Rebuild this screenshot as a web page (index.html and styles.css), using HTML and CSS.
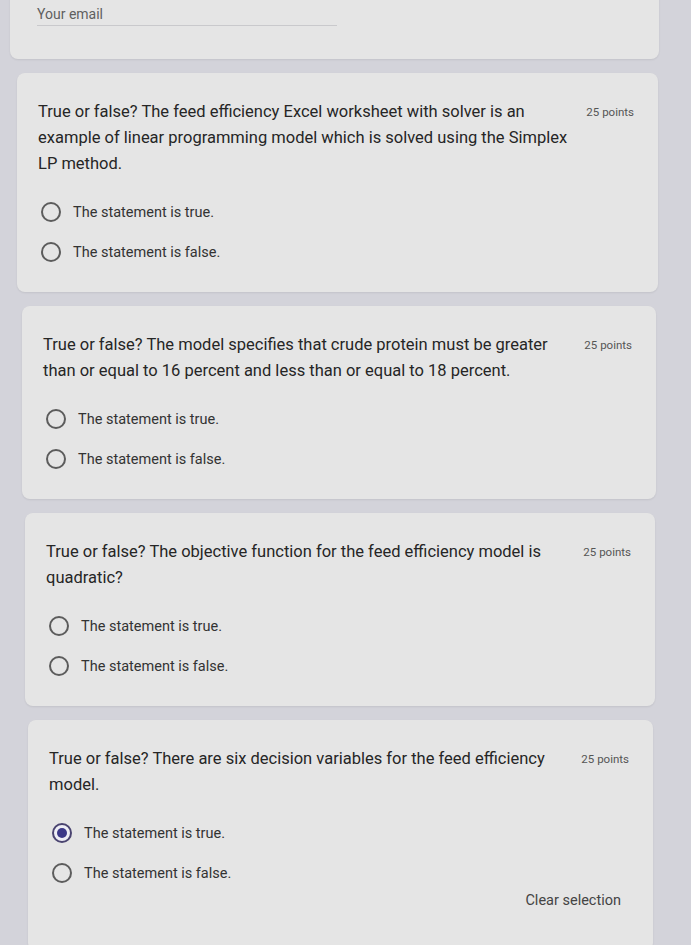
FILE: index.html
```html
<!DOCTYPE html>
<html lang="en">
<head>
    <meta charset="UTF-8">
    <meta name="viewport" content="width=device-width, initial-scale=1.0">
    <title>Feed Efficiency Quiz</title>
    <link rel="stylesheet" href="styles.css">
</head>
<body>
    <div class="form">
        <div class="card email-card">
            <div class="email-field">Your email</div>
        </div>

        <div class="card">
            <div class="question-head">
                <div class="question">True or false? The feed efficiency Excel worksheet with solver is an example of linear programming model which is solved using the Simplex LP method.</div>
                <div class="points">25 points</div>
            </div>
            <div class="options">
                <label class="option"><span class="radio"></span>The statement is true.</label>
                <label class="option"><span class="radio"></span>The statement is false.</label>
            </div>
        </div>

        <div class="card">
            <div class="question-head">
                <div class="question">True or false? The model specifies that crude protein must be greater than or equal to 16 percent and less than or equal to 18 percent.</div>
                <div class="points">25 points</div>
            </div>
            <div class="options">
                <label class="option"><span class="radio"></span>The statement is true.</label>
                <label class="option"><span class="radio"></span>The statement is false.</label>
            </div>
        </div>

        <div class="card">
            <div class="question-head">
                <div class="question">True or false? The objective function for the feed efficiency model is quadratic?</div>
                <div class="points">25 points</div>
            </div>
            <div class="options">
                <label class="option"><span class="radio"></span>The statement is true.</label>
                <label class="option"><span class="radio"></span>The statement is false.</label>
            </div>
        </div>

        <div class="card last-card">
            <div class="question-head">
                <div class="question">True or false? There are six decision variables for the feed efficiency model.</div>
                <div class="points">25 points</div>
            </div>
            <div class="options">
                <label class="option"><span class="radio checked"></span>The statement is true.</label>
                <label class="option"><span class="radio"></span>The statement is false.</label>
            </div>
            <div class="card-footer">
                <span class="clear-link">Clear selection</span>
            </div>
        </div>
    </div>
</body>
</html>
```

FILE: styles.css
```css
body {
    margin: 0;
    background-color: #d3d3da;
    font-family: Roboto, "Noto Sans", sans-serif;
    color: #2c2c2c;
}

.form {
    display: flex;
    flex-direction: column;
    gap: 14px;
    padding-bottom: 20px;
}

.card {
    background: #e5e5e5;
    border-radius: 8px;
    box-shadow: 0 1px 2px rgba(0, 0, 0, 0.08);
    padding: 26px 24px 20px 21px;
}

/* the photo is taken at a slight angle, so each card sits a little further in */
.card:nth-child(1) { margin: 0 32px 0 10px; }
.card:nth-child(2) { margin: 0 33px 0 17px; }
.card:nth-child(3) { margin: 0 35px 0 22px; }
.card:nth-child(4) { margin: 0 36px 0 25px; }
.card:nth-child(5) { margin: 0 38px 0 28px; }

.email-card {
    margin-top: -10px !important;
    border-radius: 0 0 8px 8px;
    padding: 14px 24px 33px 27px;
}

.email-field {
    width: 300px;
    font-size: 14px;
    line-height: 20px;
    color: #5f5f5f;
    border-bottom: 1px solid #c9c9cc;
    padding-bottom: 1px;
}

.question-head {
    display: flex;
    align-items: flex-start;
}

.question {
    flex: 1;
    font-size: 16.5px;
    line-height: 26px;
    color: #262626;
}

.points {
    margin-left: 14px;
    font-size: 11.5px;
    line-height: 26px;
    color: #555;
    white-space: nowrap;
}

.options {
    margin-top: 15px;
}

.option {
    display: flex;
    align-items: center;
    gap: 12px;
    height: 40px;
    padding-left: 3px;
    font-size: 14.5px;
    color: #333;
}

.radio {
    box-sizing: border-box;
    width: 20px;
    height: 20px;
    border: 2px solid #5c5c5c;
    border-radius: 50%;
    position: relative;
}

.radio.checked {
    border-color: #4a4470;
    background: #eeeef6;
}

.radio.checked::after {
    content: "";
    position: absolute;
    top: 3px;
    left: 3px;
    width: 10px;
    height: 10px;
    border-radius: 50%;
    background: #3c3888;
}

.last-card {
    padding-bottom: 40px;
}

.card-footer {
    display: flex;
    justify-content: flex-end;
    padding-right: 8px;
    margin-top: -2px;
}

.clear-link {
    font-size: 14.5px;
    line-height: 20px;
    color: #444;
}
```
